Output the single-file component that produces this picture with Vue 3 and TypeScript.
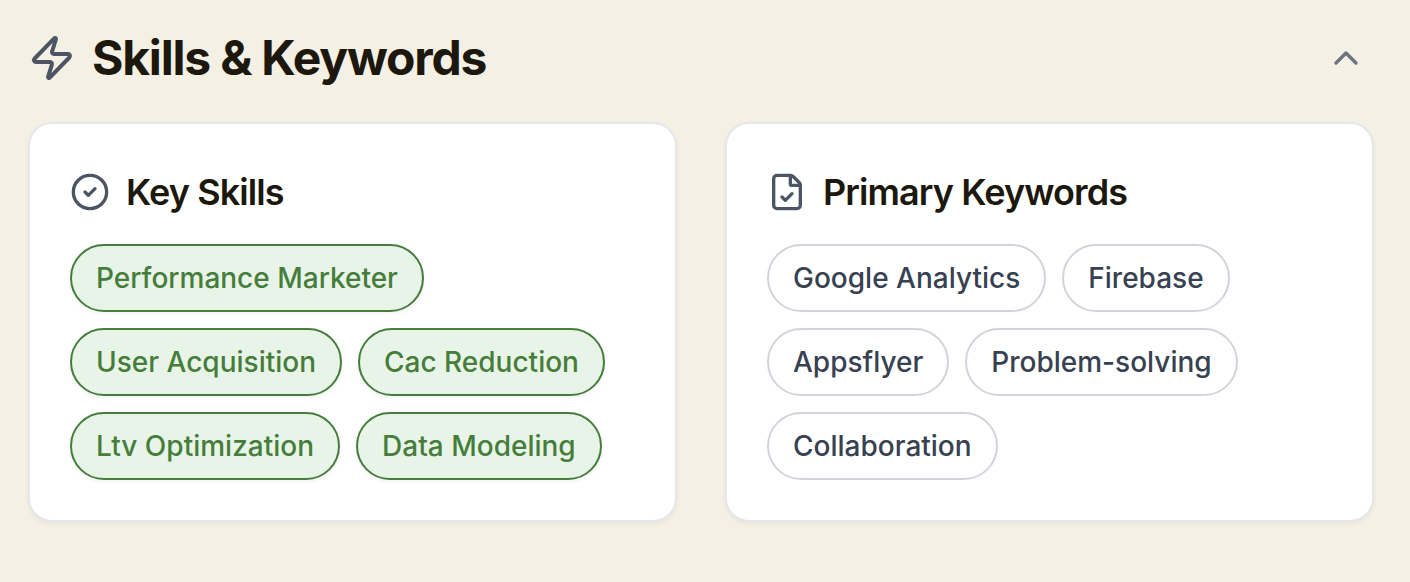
<script setup lang="ts">
import { ref } from 'vue'

const open = ref(true)
const skills: string[] = ['Performance Marketer', 'User Acquisition', 'Cac Reduction', 'Ltv Optimization', 'Data Modeling']
const keywords: string[] = ['Google Analytics', 'Firebase', 'Appsflyer', 'Problem-solving', 'Collaboration']
</script>

<template>
  <section class="panel">
    <header class="head">
      <svg class="bolt" viewBox="0 0 24 24" aria-hidden="true">
        <path d="M4 14a1 1 0 0 1-.78-1.63l9.9-10.2a.5.5 0 0 1 .86.46l-1.92 6.02A1 1 0 0 0 13 10h7a1 1 0 0 1 .78 1.63l-9.9 10.2a.5.5 0 0 1-.86-.46l1.92-6.02A1 1 0 0 0 11 14z" />
      </svg>
      <h1>Skills &amp; Keywords</h1>
      <button class="toggle" type="button" aria-label="Toggle section" :aria-expanded="open" @click="open = !open">
        <svg viewBox="0 0 24 24" aria-hidden="true"><path d="m18 15-6-6-6 6" /></svg>
      </button>
    </header>
    <div v-if="open" class="cards">
      <article class="card">
        <h2>
          <svg viewBox="0 0 24 24" aria-hidden="true">
            <circle cx="12" cy="12" r="10" /><path d="m9 12 2 2 4-4" />
          </svg>
          Key Skills
        </h2>
        <ul>
          <li v-for="s in skills" :key="s" class="green">{{ s }}</li>
        </ul>
      </article>
      <article class="card">
        <h2>
          <svg viewBox="0 0 24 24" aria-hidden="true">
            <path d="M6 22a2 2 0 0 1-2-2V4a2 2 0 0 1 2-2h8a2.4 2.4 0 0 1 1.704.706l3.588 3.588A2.4 2.4 0 0 1 20 8v12a2 2 0 0 1-2 2z" />
            <path d="M14 2v5a1 1 0 0 0 1 1h5" /><path d="m9 15 2 2 4-4" />
          </svg>
          Primary Keywords
        </h2>
        <ul>
          <li v-for="k in keywords" :key="k">{{ k }}</li>
        </ul>
      </article>
    </div>
  </section>
</template>

<style>
body {
  margin: 0;
  background: #f4f0e4;
}
</style>

<style scoped>
.panel {
  padding: 28px 36px 60px 28px;
  font-family: Inter, "Liberation Sans", sans-serif;
  color: #1c180e;
}
svg {
  flex: none;
  fill: none;
  stroke: #4b5563;
  stroke-width: 2;
  stroke-linecap: round;
  stroke-linejoin: round;
}
.head {
  display: flex;
  align-items: center;
  gap: 16px;
  margin-bottom: 34px;
}
.bolt {
  width: 48px;
  height: 48px;
}
h1 {
  flex: 1;
  margin: 0;
  font-size: 48px;
  line-height: 60px;
  font-weight: 700;
  letter-spacing: -0.025em;
}
.toggle {
  display: flex;
  padding: 8px;
  border: 0;
  background: none;
  cursor: pointer;
}
.toggle svg {
  width: 40px;
  height: 40px;
  stroke: #6b7280;
}
.cards {
  display: grid;
  grid-template-columns: 1fr 1fr;
  gap: 48px;
}
.card {
  padding: 40px;
  border: 2px solid #e5e7eb;
  border-radius: 24px;
  background: #fff;
  box-shadow: 0 2px 4px rgba(0, 0, 0, 0.05);
}
h2 {
  display: flex;
  align-items: center;
  gap: 16px;
  margin: 0 0 24px;
  font-size: 36px;
  line-height: 56px;
  font-weight: 600;
  letter-spacing: -0.025em;
}
h2 svg {
  width: 40px;
  height: 40px;
}
ul {
  display: flex;
  flex-wrap: wrap;
  gap: 16px;
  margin: 0;
  padding: 0;
  list-style: none;
}
li {
  padding: 12px 24px;
  border: 2px solid #d1d5db;
  border-radius: 40px;
  font-size: 28px;
  line-height: 40px;
  font-weight: 500;
  color: #374151;
}
.green {
  border-color: #457d3b;
  background: #e9f4e8;
  color: #457d3b;
  box-shadow: 0 2px 4px rgba(0, 0, 0, 0.05);
}
</style>
